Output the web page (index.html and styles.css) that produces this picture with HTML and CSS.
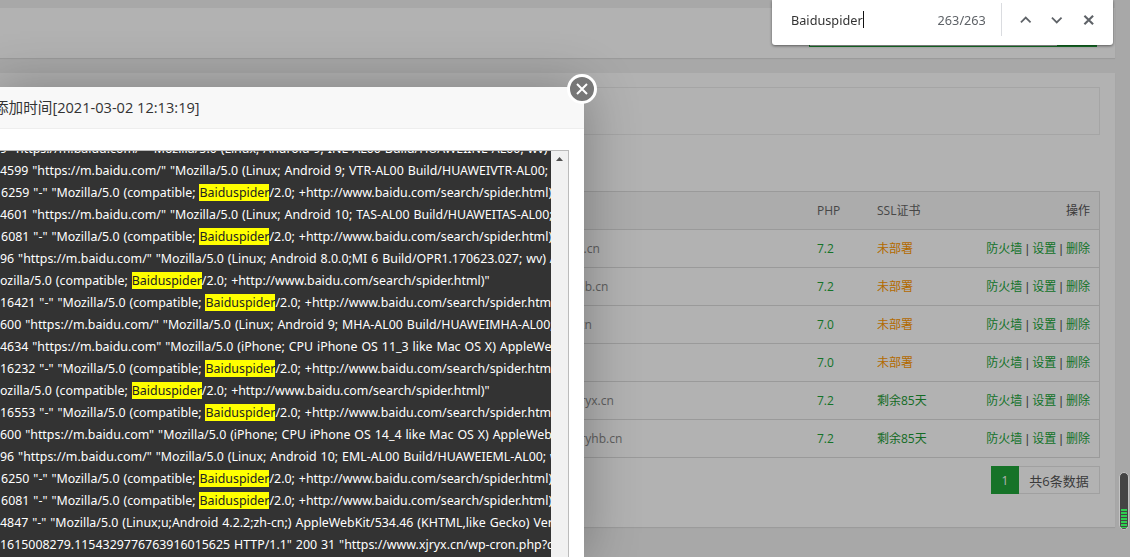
FILE: index.html
```html
<!DOCTYPE html>
<html lang="zh-CN">
<head>
<meta charset="utf-8">
<title>网站日志</title>
<link rel="stylesheet" href="styles.css">
</head>
<body>
<main class="page">
  <div class="topstrip"></div>
  <section class="panel panel-top">
    <div class="searchbox"><div class="searchbtn"></div></div>
  </section>
  <section class="panel panel-main">
    <div class="tipbox"></div>
    <div class="tablewrap">
      <table class="sites">
        <thead>
          <tr><th class="c-name">域名</th><th class="c-php">PHP</th><th class="c-ssl">SSL证书</th><th class="c-ops">操作</th></tr>
        </thead>
        <tbody>
          <tr><td class="c-name">www.xjryx.cn</td><td class="c-php">7.2</td><td class="c-ssl warn">未部署</td><td class="c-ops"><a>防火墙</a> | <a>设置</a> | <a>删除</a></td></tr>
          <tr><td class="c-name">www.xjryhb.cn</td><td class="c-php">7.2</td><td class="c-ssl warn">未部署</td><td class="c-ops"><a>防火墙</a> | <a>设置</a> | <a>删除</a></td></tr>
          <tr><td class="c-name">www.xjrt.cn</td><td class="c-php">7.0</td><td class="c-ssl warn">未部署</td><td class="c-ops"><a>防火墙</a> | <a>设置</a> | <a>删除</a></td></tr>
          <tr><td class="c-name"></td><td class="c-php">7.0</td><td class="c-ssl warn">未部署</td><td class="c-ops"><a>防火墙</a> | <a>设置</a> | <a>删除</a></td></tr>
          <tr><td class="c-name">www.abxjryx.cn</td><td class="c-php">7.2</td><td class="c-ssl ok">剩余85天</td><td class="c-ops"><a>防火墙</a> | <a>设置</a> | <a>删除</a></td></tr>
          <tr><td class="c-name">www.abxjryhb.cn</td><td class="c-php">7.2</td><td class="c-ssl ok">剩余85天</td><td class="c-ops"><a>防火墙</a> | <a>设置</a> | <a>删除</a></td></tr>
        </tbody>
      </table>
    </div>
    <div class="pager"><span class="cur">1</span><span class="count">共6条数据</span></div>
  </section>
</main>

<div class="shade"></div>

<div class="thumb"><div class="thumb-marks"></div></div>

<div class="findbar">
  <span class="find-text">Baiduspider</span><span class="caret"></span>
  <span class="find-count">263/263</span>
  <span class="find-sep"></span>
  <svg class="find-ico" width="14" height="14" viewBox="0 0 14 14"><path d="M2 9.5 7 4.5 12 9.5" fill="none" stroke="#5f6368" stroke-width="1.8"/></svg>
  <svg class="find-ico" width="14" height="14" viewBox="0 0 14 14"><path d="M2 4.5 7 9.5 12 4.5" fill="none" stroke="#5f6368" stroke-width="1.8"/></svg>
  <svg class="find-ico" width="14" height="14" viewBox="0 0 14 14"><path d="M2.5 2.5 11.5 11.5M11.5 2.5 2.5 11.5" fill="none" stroke="#5f6368" stroke-width="2.2"/></svg>
</div>

<div class="modal">
  <div class="modal-title">添加时间[2021-03-02 12:13:19]</div>
  <div class="modal-body">
    <div class="logframe">
      <div class="log">
        <div class="ln first">9 "https://m.baidu.com/" "Mozilla/5.0 (Linux; Android 9; INE-AL00 Build/HUAWEIINE-AL00; wv) AppleWebKit</div>
        <div class="ln">4599 "https://m.baidu.com/" "Mozilla/5.0 (Linux; Android 9; VTR-AL00 Build/HUAWEIVTR-AL00; wv) AppleWebKit</div>
        <div class="ln cut">16259 "-" "Mozilla/5.0 (compatible; <mark>Baiduspider</mark>/2.0; +http://www.baidu.com/search/spider.html)"</div>
        <div class="ln">4601 "https://m.baidu.com/" "Mozilla/5.0 (Linux; Android 10; TAS-AL00 Build/HUAWEITAS-AL00; wv) AppleWebKit</div>
        <div class="ln cut">16081 "-" "Mozilla/5.0 (compatible; <mark>Baiduspider</mark>/2.0; +http://www.baidu.com/search/spider.html)"</div>
        <div class="ln">96 "https://m.baidu.com/" "Mozilla/5.0 (Linux; Android 8.0.0;MI 6 Build/OPR1.170623.027; wv) AppleWebKit</div>
        <div class="ln">ozilla/5.0 (compatible; <mark>Baiduspider</mark>/2.0; +http://www.baidu.com/search/spider.html)"</div>
        <div class="ln">16421 "-" "Mozilla/5.0 (compatible; <mark>Baiduspider</mark>/2.0; +http://www.baidu.com/search/spider.html)"</div>
        <div class="ln">600 "https://m.baidu.com/" "Mozilla/5.0 (Linux; Android 9; MHA-AL00 Build/HUAWEIMHA-AL00; wv) AppleWebKit</div>
        <div class="ln">4634 "https://m.baidu.com" "Mozilla/5.0 (iPhone; CPU iPhone OS 11_3 like Mac OS X) AppleWebKit/605</div>
        <div class="ln">16232 "-" "Mozilla/5.0 (compatible; <mark>Baiduspider</mark>/2.0; +http://www.baidu.com/search/spider.html)"</div>
        <div class="ln">ozilla/5.0 (compatible; <mark>Baiduspider</mark>/2.0; +http://www.baidu.com/search/spider.html)"</div>
        <div class="ln">16553 "-" "Mozilla/5.0 (compatible; <mark>Baiduspider</mark>/2.0; +http://www.baidu.com/search/spider.html)"</div>
        <div class="ln">600 "https://m.baidu.com" "Mozilla/5.0 (iPhone; CPU iPhone OS 14_4 like Mac OS X) AppleWebKit/605</div>
        <div class="ln">96 "https://m.baidu.com/" "Mozilla/5.0 (Linux; Android 10; EML-AL00 Build/HUAWEIEML-AL00; wv) AppleWebKit</div>
        <div class="ln cut">16250 "-" "Mozilla/5.0 (compatible; <mark>Baiduspider</mark>/2.0; +http://www.baidu.com/search/spider.html)"</div>
        <div class="ln cut">16081 "-" "Mozilla/5.0 (compatible; <mark>Baiduspider</mark>/2.0; +http://www.baidu.com/search/spider.html)"</div>
        <div class="ln">4847 "-" "Mozilla/5.0 (Linux;u;Android 4.2.2;zh-cn;) AppleWebKit/534.46 (KHTML,like Gecko) Version/5.1</div>
        <div class="ln">1615008279.1154329776763916015625 HTTP/1.1" 200 31 "https://www.xjryx.cn/wp-cron.php?doing_wp_cron</div>
      </div>
      <div class="logbar"><svg width="17" height="16" viewBox="0 0 17 16"><path d="M5 10 8.5 6 12 10Z" fill="#505050"/></svg></div>
    </div>
  </div>
  <button class="modal-close" type="button" aria-label="关闭"><svg width="16" height="16" viewBox="0 0 16 16"><path d="M3 3 13 13M13 3 3 13" fill="none" stroke="#fff" stroke-width="2"/></svg></button>
</div>
</body>
</html>
```
FILE: styles.css
```css
* { box-sizing: border-box; }
html, body { margin: 0; height: 100%; overflow: hidden; }
body { background: #f1f1f1; font-family: "Open Sans", "Noto Sans CJK SC", sans-serif; font-size: 12px; color: #666; }

.page { width: 1130px; height: 557px; }
.topstrip { height: 8px; }
.panel { background: #fff; margin-right: 15px; box-shadow: 0 1px 1px rgba(0, 0, 0, .08); }
.panel-top { height: 50px; padding-right: 18px; display: flex; justify-content: flex-end; }
.searchbox { width: 288px; height: 39px; border: 1px solid #20a53a; border-top: 0; display: flex; justify-content: flex-end; }
.searchbtn { width: 39px; background: #20a53a; }
.panel-main { margin-top: 15px; height: 454px; padding: 14px 15px 0 0; }
.tipbox { height: 48px; border: 1px solid #ececec; }
.tablewrap { margin-top: 56px; border: 1px solid #ddd; }
.sites { width: 100%; border-collapse: collapse; table-layout: fixed; }
.sites th, .sites td { height: 38px; padding: 0; font-weight: 400; text-align: left; border-bottom: 1px solid #ddd; }
.sites th { height: 37px; background: #f6f6f6; color: #666; }
.sites tr:last-child td { border-bottom: 0; }
.sites .c-name { padding-left: 525px; color: #888; }
.c-php { width: 60px; color: #20a53a; }
th.c-php { color: #666; }
.c-ssl { width: 101px; }
.sites .c-ops { width: 121px; padding: 0 9px 2px 0; text-align: right; font-family: "Liberation Sans", "Noto Sans CJK SC", sans-serif; color: #555; }
.c-ops a { color: #20a53a; }
.warn { color: #ff9900; }
.ok { color: #1c9a34; }
.pager { margin-top: 8px; display: flex; justify-content: flex-end; height: 28px; }
.cur { width: 28px; background: #20a53a; color: #fff; display: flex; align-items: center; justify-content: center; }
.count { width: 81px; border: 1px solid #e6e6e6; border-left: 0; color: #555; font-size: 13px; display: flex; align-items: center; justify-content: center; }

.shade { position: fixed; inset: 0; background: rgba(0, 0, 0, .3); }

.thumb { position: fixed; left: 1119px; top: 472px; width: 10px; height: 58px; background: #444; border: 1px solid #c4c4c4; border-radius: 5px; padding: 36px 1px 0; }
.thumb-marks { height: 19px; background: repeating-linear-gradient(#2fcf50 0 2px, #444 2px 3px); }

.findbar { position: fixed; left: 772px; top: 0; width: 341px; height: 45px; background: #fff; border-radius: 0 0 3px 3px; box-shadow: 0 1px 3px rgba(0, 0, 0, .5); display: flex; align-items: center; font-family: "Noto Sans", sans-serif; font-size: 12.7px; color: #333; padding: 0 0 6px 19px; }
.caret { width: 1px; height: 17px; background: #111; }
.find-count { margin-left: 74px; color: #5f6368; width: 47px; }
.find-sep { width: 1px; height: 33px; background: #dadce0; margin: 0 17px 0 16px; }
.find-ico { margin-right: 18px; }

.modal { position: fixed; left: -6px; top: 87px; width: 590px; height: 470px; background: #fff; box-shadow: 1px 1px 50px rgba(0, 0, 0, .3); }
.modal-title { height: 42px; line-height: 41px; background: #f8f8f8; border-bottom: 1px solid #eee; font-size: 14.6px; color: #333; }
.modal-body { padding: 21px 15px 0 6px; }
.logframe { display: flex; height: 420px; border-right: 1px solid #bbb; border-top: 1px solid #bbb; }
.log { flex: 1; min-width: 0; overflow: hidden; background: #333; color: #fff; font-family: "Noto Sans", sans-serif; font-size: 12.4px; word-spacing: .7px; }
.ln { height: 22px; line-height: 22px; white-space: nowrap; }
.ln.first { margin-top: -13px; }
.ln.cut { margin-left: -6px; }
.ln mark { background: #ff0; color: #222; }
.logbar { width: 17px; background: #f1f1f1; }
.logbar svg { display: block; }
.modal-close { position: absolute; right: -13px; top: -13px; width: 30px; height: 30px; padding: 0; border: 3px solid #fff; border-radius: 50%; background: #777; display: flex; align-items: center; justify-content: center; }
```
